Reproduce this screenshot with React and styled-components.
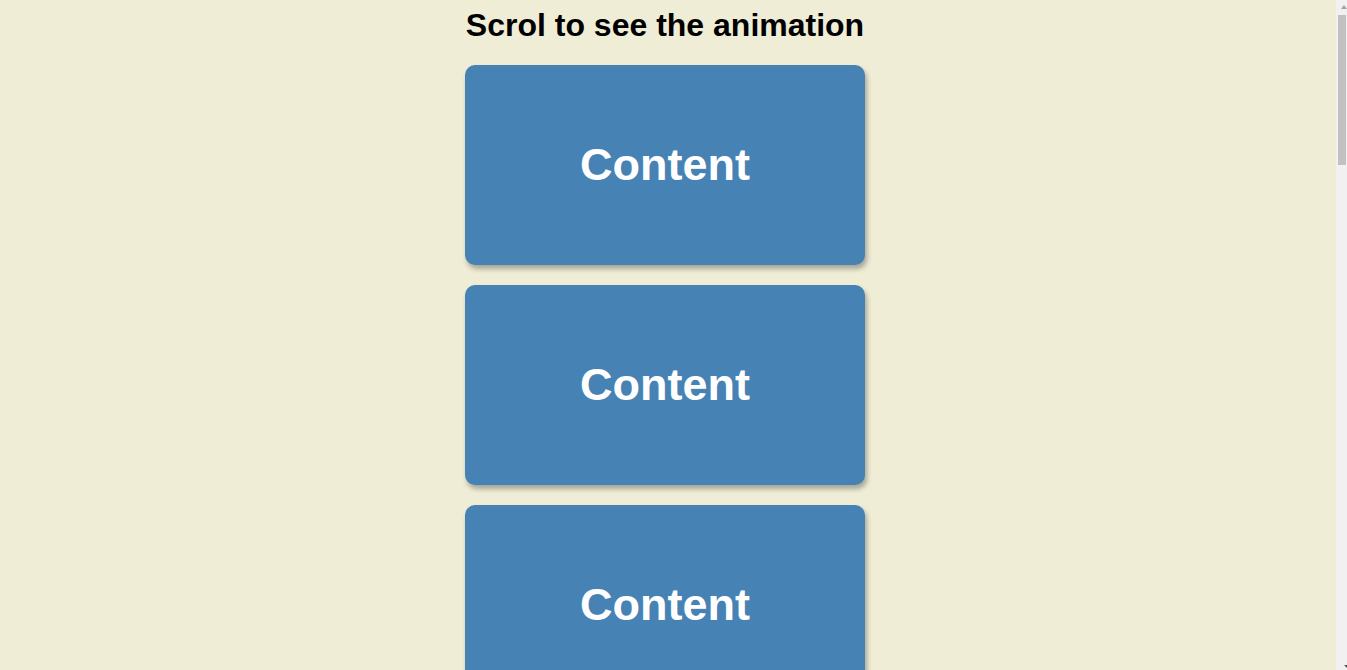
import styled, { createGlobalStyle } from 'styled-components'

const GlobalStyle = createGlobalStyle`
  * {
    box-sizing: border-box;
  }
  body {
    margin: 0;
    background-color: #efedd6;
    font-family: 'Liberation Sans', Arial, sans-serif;
    overflow-x: hidden;
  }
`

const Page = styled.div`
  display: flex;
  flex-direction: column;
  align-items: center;
  padding-right: 17px;
`

const Title = styled.h1`
  margin: 6px 0 11px;
  font-size: 32px;
  line-height: 38px;
  font-weight: bold;
  color: #000;
`

const Box = styled.div`
  display: flex;
  align-items: center;
  justify-content: center;
  width: 400px;
  height: 200px;
  margin: 10px;
  border-radius: 10px;
  background-color: steelblue;
  color: #fff;
  box-shadow: 2px 4px 5px rgba(0, 0, 0, 0.3);
`

const BoxText = styled.h2`
  margin: 0;
  font-size: 45px;
  font-weight: bold;
`

// window scrollbar, drawn since the browser hides its own
const Scrollbar = styled.div`
  position: fixed;
  top: 0;
  right: 0;
  bottom: 0;
  width: 11px;
  background-color: #f1f1f1;
`

const Thumb = styled.div`
  position: absolute;
  top: 15px;
  left: 2px;
  width: 8px;
  height: 150px;
  background-color: #c1c1c1;
`

const Arrow = styled.div`
  position: absolute;
  left: ${(p) => (p.$down ? '8px' : '5px')};
  ${(p) => (p.$down ? 'bottom: 2px;' : 'top: 5px;')}
  width: 0;
  height: 0;
  border-left: 3px solid transparent;
  border-right: 3px solid transparent;
  ${(p) =>
    p.$down ? 'border-top: 3px solid #505050;' : 'border-bottom: 4px solid #a3a3a3;'}
`

const boxes = Array.from({ length: 13 }, (_, i) => i)

const App = () => {
  return (
    <>
      <GlobalStyle />
      <Page>
        <Title>Scrol to see the animation</Title>
        {boxes.map((i) => (
          <Box key={i}>
            <BoxText>Content</BoxText>
          </Box>
        ))}
      </Page>
      <Scrollbar>
        <Arrow />
        <Thumb />
        <Arrow $down />
      </Scrollbar>
    </>
  )
}

export default App
